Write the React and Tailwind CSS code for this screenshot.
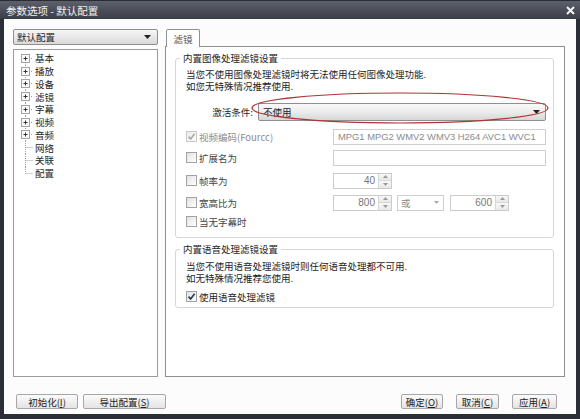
import React from "react";

const Check = ({ checked, disabled }) => (
  <span
    className={
      disabled
        ? "w-[11px] h-[11px] border border-[#c9c9c9] bg-gradient-to-br from-[#ececec] to-[#fbfbfb] flex items-center justify-center shrink-0"
        : "w-[11px] h-[11px] border border-[#a3a3a3] bg-gradient-to-br from-[#e2e2e2] to-[#ffffff] flex items-center justify-center shrink-0"
    }
  >
    {checked && (
      <svg width="9" height="9" viewBox="0 0 9 9">
        <path
          d="M1.5 4.6 L3.6 6.9 L7.6 1.7"
          stroke={disabled ? "#a8a8a8" : "#27375a"}
          strokeWidth="1.6"
          fill="none"
        />
      </svg>
    )}
  </span>
);

const Tri = ({ up }) => (
  <svg width="5" height="3" viewBox="0 0 5 3">
    <path d={up ? "M0 3 L2.5 0 L5 3 Z" : "M0 0 L2.5 3 L5 0 Z"} fill="#9a9a9a" />
  </svg>
);

const Spin = ({ value, w }) => (
  <div className={"flex h-[16px] border border-[#cbcbcb] bg-white " + w}>
    <div className="flex-1 text-right pr-[3px] text-[#777] leading-[14px] font-['Liberation_Sans',sans-serif] text-[10px]">
      {value}
    </div>
    <div className="w-[13px] flex flex-col border-l border-[#d8d8d8]">
      <div className="flex-1 flex items-center justify-center bg-gradient-to-b from-[#f8f8f8] to-[#e8e8e8] border-b border-[#d8d8d8]">
        <Tri up />
      </div>
      <div className="flex-1 flex items-center justify-center bg-gradient-to-b from-[#f8f8f8] to-[#e8e8e8]">
        <Tri />
      </div>
    </div>
  </div>
);

const TreeRow = ({ label, box, first, last }) => (
  <div className="flex items-center h-[12.75px]">
    <svg width="20" height="13" viewBox="0 0 20 13" className="shrink-0 overflow-visible">
      <line
        x1="11.5"
        y1={first ? 6.5 : 0}
        x2="11.5"
        y2={last ? 6.5 : 13}
        stroke="#a0a0a0"
        strokeDasharray="1 1"
      />
      <line x1={box ? 15 : 11.5} y1="6.5" x2="19" y2="6.5" stroke="#a0a0a0" strokeDasharray="1 1" />
      {box && (
        <g>
          <rect x="7.5" y="2.5" width="8" height="8" fill="#fafafa" stroke="#a3a3a3" />
          <line x1="9.5" y1="6.5" x2="13.5" y2="6.5" stroke="#333" />
          <line x1="11.5" y1="4.5" x2="11.5" y2="8.5" stroke="#333" />
        </g>
      )}
    </svg>
    <span className="ml-[1px] leading-[12px]">{label}</span>
  </div>
);

const Btn = ({ w, children }) => (
  <div
    className={
      "h-[15px] rounded-[2px] border border-[#a7a7a7] bg-gradient-to-b from-[#fbfbfb] to-[#e4e4e4] flex items-center justify-center leading-[12px] text-[#222] " +
      w
    }
  >
    {children}
  </div>
);

export default function App() {
  const tree = [
    ["基本", true],
    ["播放", true],
    ["设备", true],
    ["滤镜", true],
    ["字幕", true],
    ["视频", true],
    ["音频", true],
    ["网络", false],
    ["关联", false],
    ["配置", false],
  ];
  return (
    <div className="w-[580px] h-[419px] bg-[#2b2e36] flex flex-col font-['Noto_Sans_CJK_SC',sans-serif] text-[9.5px] text-[#1e1e1e] relative overflow-hidden">
      {/* title bar */}
      <div className="h-[19px] shrink-0 bg-gradient-to-b from-[#5c606b] to-[#3b3e49] flex items-center justify-between pl-[6px] pr-[5px] border-t border-[#2a2c33]">
        <span className="text-[10.5px] text-[#f2f2f2] leading-[13px]">参数选项 - 默认配置</span>
        <svg width="9" height="9" viewBox="0 0 9 9">
          <path d="M1 1 L8 8 M8 1 L1 8" stroke="#f4f4f4" strokeWidth="2" />
        </svg>
      </div>

      {/* body */}
      <div className="flex-1 mx-[4px] mb-[5px] bg-[#fcfcfc] flex flex-col">
        <div className="flex pt-[10px] pl-[9px] gap-[7px]">
          {/* left column */}
          <div className="w-[145px] flex flex-col gap-[4px]">
            <div className="h-[16px] border border-[#8e8f8f] rounded-[2px] bg-gradient-to-b from-[#f6f6f6] to-[#dadada] flex items-center justify-between pl-[3px] pr-[6px]">
              <span className="leading-[12px]">默认配置</span>
              <svg width="7" height="4" viewBox="0 0 7 4">
                <path d="M0 0 L3.5 4 L7 0 Z" fill="#222" />
              </svg>
            </div>
            <div className="h-[328px] border border-[#9c9c9c] bg-white pt-[2px]">
              {tree.map(([l, b], i) => (
                <TreeRow key={l} label={l} box={b} first={i === 0} last={i === tree.length - 1} />
              ))}
            </div>
          </div>

          {/* right column */}
          <div className="w-[400px] flex flex-col">
            <div className="h-[17px] flex">
              <div className="ml-[1px] w-[34px] h-[18px] border border-b-0 border-[#8e8f8f] rounded-t-[2px] bg-white relative z-10 flex items-center justify-center text-[#555] leading-[12px]">
                滤镜
              </div>
            </div>
            <div className="h-[331px] border border-[#8e8f8f] bg-white pl-[9px] pt-[5px]">
              {/* group 1 */}
              <fieldset className="w-[379px] h-[186px] border border-[#d6d6d6] rounded-[3px]">
                <legend className="ml-[4px] px-[3px] leading-[13px]">内置图像处理滤镜设置</legend>
                <div className="pl-[10px] mt-[2.5px] leading-[12.5px]">
                  <div>当您不使用图像处理滤镜时将无法使用任何图像处理功能.</div>
                  <div>如您无特殊情况推荐使用.</div>
                </div>
                <div className="flex items-center pl-[10px] mt-[10px] h-[18px]">
                  <div className="w-[67px] text-right leading-[12px]">激活条件:</div>
                  <div className="ml-[5px] w-[288px] h-[18px] border border-[#8e8f8f] rounded-[2px] bg-gradient-to-b from-[#f9f9f9] via-[#ececec] to-[#d6d6d6] flex items-center justify-between pl-[4px] pr-[5px]">
                    <span className="leading-[12px]">不使用</span>
                    <svg width="7" height="4" viewBox="0 0 7 4">
                      <path d="M0 0 L3.5 4 L7 0 Z" fill="#222" />
                    </svg>
                  </div>
                </div>
                <div className="flex items-center pl-[10px] mt-[8px] h-[16px]">
                  <div className="w-[147px] flex items-center gap-[2px]">
                    <Check checked disabled />
                    <span className="text-[#8a8a8a] leading-[12px]">视频编码(Fourcc)</span>
                  </div>
                  <div className="w-[213px] h-[16px] border border-[#cfcfcf] bg-white pl-[4px] text-[#8a8a8a] font-['Liberation_Sans',sans-serif] text-[9.4px] leading-[14px] whitespace-nowrap overflow-hidden">
                    MPG1 MPG2 WMV2 WMV3 H264 AVC1 WVC1
                  </div>
                </div>
                <div className="flex items-center pl-[10px] mt-[5px] h-[16px]">
                  <div className="w-[147px] flex items-center gap-[2px]">
                    <Check />
                    <span className="text-[#444] leading-[12px]">扩展名为</span>
                  </div>
                  <div className="w-[213px] h-[16px] border border-[#cfcfcf] bg-white" />
                </div>
                <div className="flex items-center pl-[10px] mt-[7px] h-[16px]">
                  <div className="w-[147px] flex items-center gap-[2px]">
                    <Check />
                    <span className="text-[#444] leading-[12px]">帧率为</span>
                  </div>
                  <Spin value="40" w="w-[59px]" />
                </div>
                <div className="flex items-center pl-[10px] mt-[6px] h-[16px]">
                  <div className="w-[147px] flex items-center gap-[2px]">
                    <Check />
                    <span className="text-[#444] leading-[12px]">宽高比为</span>
                  </div>
                  <Spin value="800" w="w-[59px]" />
                  <div className="ml-[5px] w-[47px] h-[16px] border border-[#cfcfcf] bg-white flex items-center justify-between pl-[3px] pr-[4px]">
                    <span className="text-[#888] leading-[12px]">或</span>
                    <svg width="5" height="3" viewBox="0 0 5 3">
                      <path d="M0 0 L2.5 3 L5 0 Z" fill="#aaa" />
                    </svg>
                  </div>
                  <div className="ml-[6px]">
                    <Spin value="600" w="w-[59px]" />
                  </div>
                </div>
                <div className="flex items-center pl-[10px] mt-[5px] h-[12px] gap-[2px]">
                  <Check />
                  <span className="text-[#444] leading-[12px]">当无字幕时</span>
                </div>
              </fieldset>

              {/* group 2 */}
              <fieldset className="w-[379px] h-[65px] mt-[5px] border border-[#d6d6d6] rounded-[3px]">
                <legend className="ml-[4px] px-[3px] leading-[13px]">内置语音处理滤镜设置</legend>
                <div className="pl-[10px] mt-[3.5px] leading-[12.5px]">
                  <div>当您不使用语音处理滤镜时则任何语音处理都不可用.</div>
                  <div>如无特殊情况推荐您使用.</div>
                </div>
                <div className="flex items-center pl-[10px] mt-[6px] h-[12px] gap-[2px]">
                  <Check checked />
                  <span className="leading-[12px]">使用语音处理滤镜</span>
                </div>
              </fieldset>
            </div>
          </div>
        </div>

        {/* bottom buttons */}
        <div className="mt-[17px] flex items-center justify-between pl-[12px] pr-[19px]">
          <div className="flex gap-[5px]">
            <Btn w="w-[62px]">
              初始化(<span className="underline">I</span>)
            </Btn>
            <Btn w="w-[83px]">
              导出配置(<span className="underline">S</span>)
            </Btn>
          </div>
          <div className="flex gap-[13px]">
            <Btn w="w-[42px]">
              确定(<span className="underline">O</span>)
            </Btn>
            <Btn w="w-[43px]">
              取消(<span className="underline">C</span>)
            </Btn>
            <Btn w="w-[45px]">
              应用(<span className="underline">A</span>)
            </Btn>
          </div>
        </div>
      </div>

      {/* red annotation ellipse */}
      <svg className="absolute left-[245px] top-[88px] pointer-events-none" width="310" height="40" viewBox="0 0 310 40">
        <ellipse cx="155" cy="20" rx="148" ry="15" fill="none" stroke="#b03434" strokeWidth="1.2" />
      </svg>
    </div>
  );
}
